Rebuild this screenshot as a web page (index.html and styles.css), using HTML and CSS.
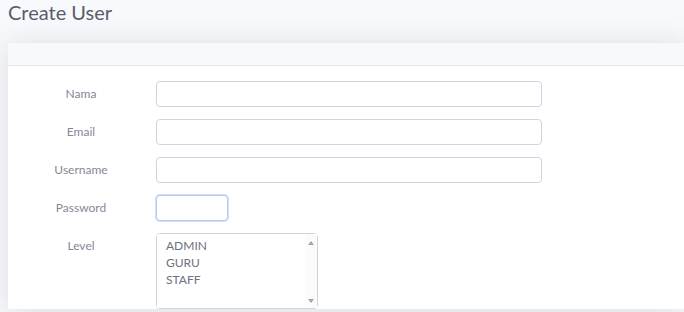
FILE: index.html
```html
<!DOCTYPE html>
<html lang="en">

<head>
    <meta charset="UTF-8">
    <meta name="viewport" content="width=device-width, initial-scale=1.0">
    <title>Create User</title>
    <link rel="stylesheet" href="styles.css">
</head>

<body>
    <h1 class="page-title">Create User</h1>

    <div class="card">
        <div class="card-header"></div>
        <form class="card-body">
            <div class="form-row">
                <label for="nama">Nama</label>
                <input type="text" id="nama" class="input-wide">
            </div>
            <div class="form-row">
                <label for="email">Email</label>
                <input type="email" id="email" class="input-wide">
            </div>
            <div class="form-row">
                <label for="username">Username</label>
                <input type="text" id="username" class="input-wide">
            </div>
            <div class="form-row">
                <label for="password">Password</label>
                <input type="password" id="password" class="input-short focused">
            </div>
            <div class="form-row">
                <label for="level">Level</label>
                <div class="listbox">
                    <select id="level" class="level-select" multiple>
                        <option>ADMIN</option>
                        <option>GURU</option>
                        <option>STAFF</option>
                    </select>
                    <div class="scrollbar">
                        <span class="arrow-up"></span>
                        <span class="arrow-down"></span>
                    </div>
                </div>
            </div>
        </form>
    </div>
</body>

</html>
```

FILE: styles.css
```css
html,
body {
    margin: 0px;
}

body {
    background: #f8f9fc;
    font-family: Lato, "Open Sans", sans-serif;
    color: #858796;
}

.page-title {
    margin: 0;
    padding: 0 8px;
    height: 43px;
    font-size: 20px;
    font-weight: 400;
    line-height: 25px;
    color: #5a5c69;
}

.card {
    margin-left: 8px;
    background: #fff;
    box-shadow: 0 2px 28px 0 rgba(58, 59, 69, 0.15);
}

.card-header {
    height: 22px;
    background: #f8f9fc;
    border-bottom: 1px solid #e3e6f0;
}

.card-body {
    padding: 15px 0 0 8px;
}

.form-row {
    display: grid;
    grid-template-columns: 130px auto;
    column-gap: 10px;
    align-items: start;
    margin-bottom: 12px;
}

.form-row label {
    text-align: center;
    font-size: 12px;
    line-height: 26px;
    color: #858796;
}

input {
    box-sizing: border-box;
    height: 26px;
    border: 1px solid #d1d3e2;
    border-radius: 4px;
    background: #fff;
    outline: none;
}

.input-wide {
    width: 386px;
}

.input-short {
    width: 72px;
}

.focused {
    border-color: #bac8f3;
    box-shadow: 0 0 0 1px rgba(78, 115, 223, 0.25);
}

.listbox {
    display: flex;
    box-sizing: border-box;
    width: 162px;
    height: 76px;
    border: 1px solid #d1d3e2;
    border-radius: 4px;
    background: #fff;
}

.level-select {
    flex: 1;
    min-width: 0;
    padding: 3px 0;
    border: none;
    font-family: Lato, "Open Sans", sans-serif;
    font-size: 12px;
    color: #6e707e;
    overflow: hidden;
    outline: none;
}

.level-select option {
    padding: 1px 9px;
}

.scrollbar {
    width: 12px;
    display: flex;
    flex-direction: column;
    justify-content: space-between;
    align-items: center;
    padding: 7px 0 5px 0;
    background: #fbfbfb;
}

.arrow-up,
.arrow-down {
    width: 0;
    height: 0;
    border-left: 3px solid transparent;
    border-right: 3px solid transparent;
}

.arrow-up {
    border-bottom: 4px solid #a3a3a3;
}

.arrow-down {
    border-top: 4px solid #a3a3a3;
}
```
